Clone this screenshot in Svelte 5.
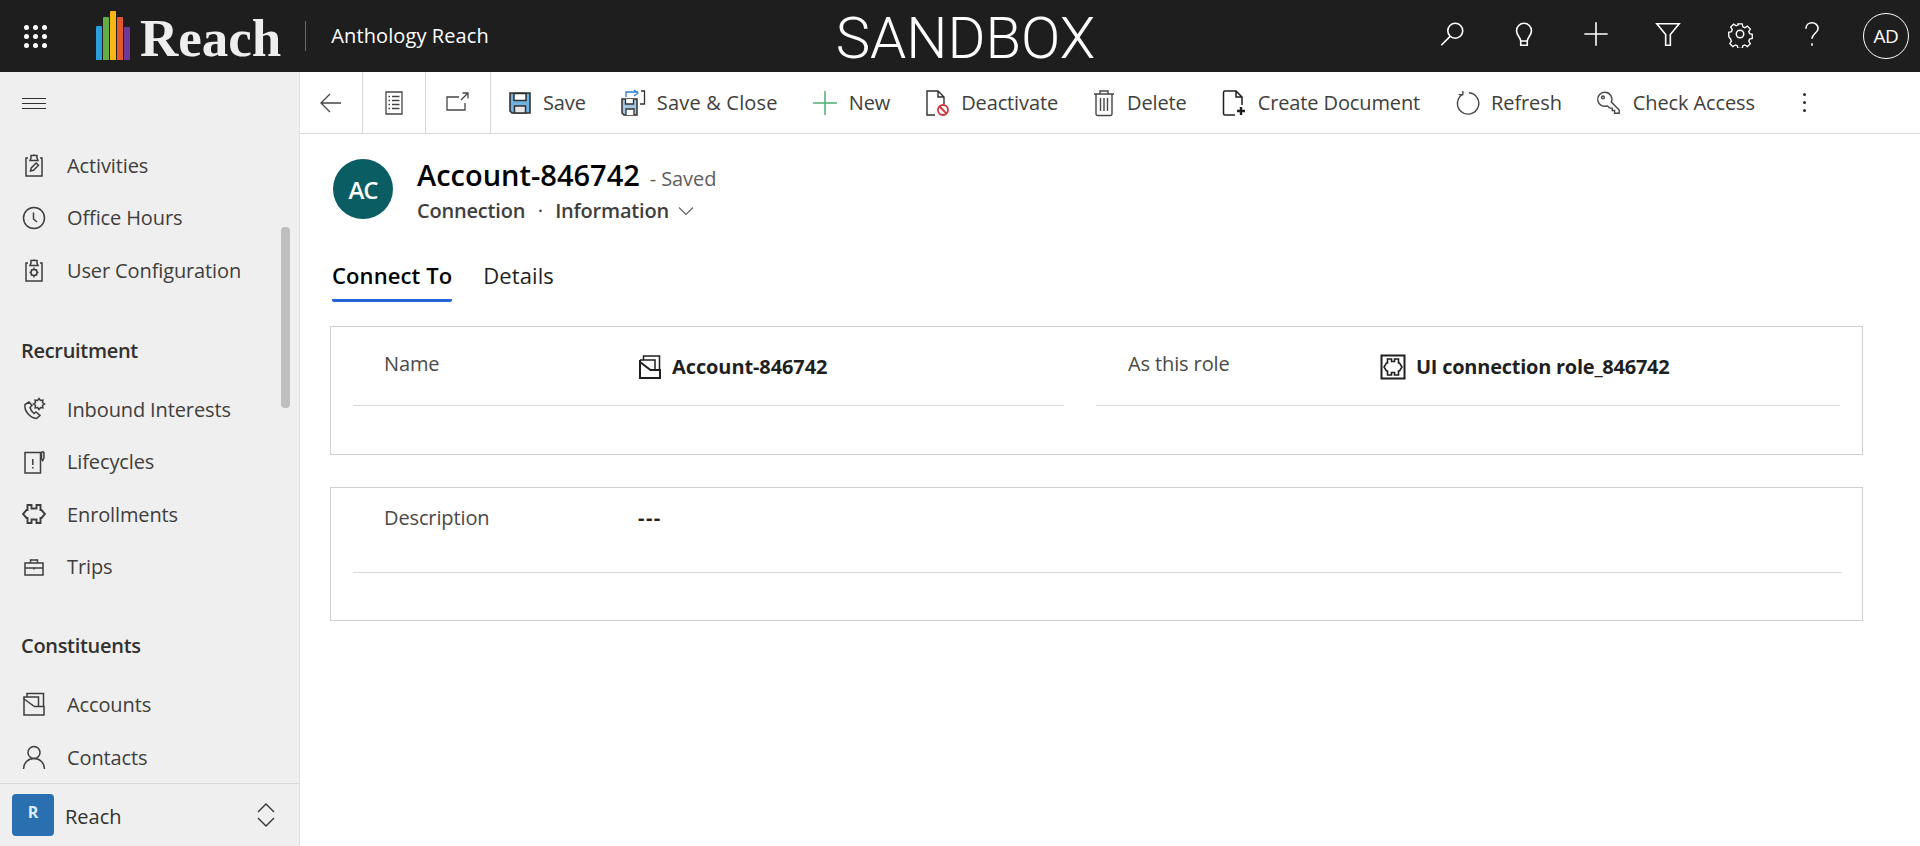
<script>
  const bars = [
    { color: '#2a9ed8', h: 34 },
    { color: '#63ad45', h: 43 },
    { color: '#fbb616', h: 49 },
    { color: '#e4572a', h: 43 },
    { color: '#6b3a96', h: 33 }
  ];

  // icons are line paths in a 24 box
  const icons = {
    activities: ['M6 5H4v18h16V5h-2', 'M9 5V2.5h2.2a1 1 0 0 1 1.6 0H15V5l1 2.5H8z', 'M8.5 18l.7-3 5-5 2.3 2.3-5 5z'],
    clock: ['M12 1.5a10.5 10.5 0 1 0 0 21 10.5 10.5 0 0 0 0-21z', 'M11.5 6.5V13l3.5 3'],
    config: ['M6 5H4v18h16V5h-2', 'M9 5V2.5h2.2a1 1 0 0 1 1.6 0H15V5l1 2.5H8z', 'M12 11.5a3 3 0 1 0 0 6 3 3 0 0 0 0-6z', 'M12 9.5v2M12 17.5v2M7.5 14.5H9M15 14.5h1.5M9 11.5l1 1M15 11.5l-1 1M9 17.5l1-1M15 17.5l-1-1'],
    inbound: ['M7 5L3 7.5C2 14 8 21 14.5 21.5l3.5-3-4-3.5-2 1.500C10 15 8.500 13 8 10.500l2-2z', 'M17 1.5L18.45 3.5 20.9 3.1 20.5 5.55 22.5 7 20.5 8.45 20.9 10.9 18.45 10.5 17 12.5 15.55 10.5 13.1 10.9 13.5 8.45 11.5 7 13.5 5.55 13.1 3.1 15.55 3.5z'],
    lifecycle: ['M3 2.5h15.5V23H3z', 'M10.8 9v6M10.8 17v1.5', 'M19.5 9V3a1.2 1.2 0 0 1 2.4 0v5l-1.2 2.5z'],
    puzzle: ['M5.5 8V3h4v3.5h5V3h4v5H19.500L23 12l-3.500 4H18.500v5h-4v-3.500h-5V21h-4v-5H4.500L1 12l3.500-4z'],
    trips: ['M3 8h18v12H3z', 'M8.5 8V5h7v3', 'M3 13h18', 'M12 12.5v2'],
    accounts: ['M2 7l10.5 7.5H22V23H2z', 'M2 7V5h14.5v9.5', 'M5 5V1.5h16.5v13'],
    contacts: ['M12 1.5a6 6 0 1 0 0 12 6 6 0 0 0 0-12z', 'M1.5 24c0-6 4.5-10.5 10.5-10.5S22.5 18 22.5 24']
  };

  const topNav = [
    { label: 'Activities', icon: 'activities' },
    { label: 'Office Hours', icon: 'clock' },
    { label: 'User Configuration', icon: 'config' }
  ];
  const recruitment = [
    { label: 'Inbound Interests', icon: 'inbound' },
    { label: 'Lifecycles', icon: 'lifecycle' },
    { label: 'Enrollments', icon: 'puzzle' },
    { label: 'Trips', icon: 'trips' }
  ];
  const constituents = [
    { label: 'Accounts', icon: 'accounts' },
    { label: 'Contacts', icon: 'contacts' }
  ];
</script>

{#snippet line(name, size = 24)}
  <svg width={size} height={size} viewBox="0 0 24 24" fill="none" stroke="currentColor" stroke-width={name === 'puzzle' ? 1.9 : 1.5}>
    {#each icons[name] as d}<path {d} />{/each}
  </svg>
{/snippet}

{#snippet navList(items)}
  {#each items as item}
    <a class="nav-item" href="#top">
      <span class="nav-icon">{@render line(item.icon)}</span>
      <span>{item.label}</span>
    </a>
  {/each}
{/snippet}

<div class="app">
  <header class="topbar">
    <div class="waffle">
      {#each Array(9) as _}<i></i>{/each}
    </div>
    <div class="logo">
      <div class="logo-bars">
        {#each bars as bar}<i style="height:{bar.h}px;background:{bar.color}"></i>{/each}
      </div>
      <span class="logo-word">Reach</span>
    </div>
    <span class="app-name">Anthology Reach</span>
    <div class="sandbox">SANDBOX</div>
    <div class="top-actions">
      <svg viewBox="0 0 30 30" fill="none" stroke="currentColor" stroke-width="1.7">
        <circle cx="18.5" cy="11.5" r="8" /><path d="M13 17.5L3.5 27" />
      </svg>
      <svg viewBox="0 0 30 30" fill="none" stroke="currentColor" stroke-width="1.7">
        <path d="M11.5 22.5c0-4-4.5-5.5-4.5-11a8 8 0 0 1 16 0c0 5.5-4.5 7-4.5 11zM11.5 22.5V27h7v-4.5" />
      </svg>
      <svg viewBox="0 0 30 30" fill="none" stroke="currentColor" stroke-width="1.7">
        <path d="M15 2.5v25M2.5 15h25" />
      </svg>
      <svg viewBox="0 0 30 30" fill="none" stroke="currentColor" stroke-width="1.7">
        <path d="M3 4h24l-9.5 11.5V27h-5V15.5z" />
      </svg>
      <svg viewBox="0 0 30 30" fill="none" stroke="currentColor" stroke-width="1.6">
        <circle cx="15" cy="15" r="4" />
        <path d="M12.5 3h5l.8 3.5 2.4 1 3-1.9 3.5 3.5-1.9 3 1 2.4 3.2.8v5l-3.2.8-1 2.4 1.900 3-3.500 3.500-3-1.900-2.400 1-.8 3.200h-5l-.8-3.200-2.400-1-3 1.900-3.500-3.500 1.900-3-1-2.400L1.500 18v-5l3.200-.8 1-2.400-1.900-3 3.500-3.500 3 1.900 2.400-1z" transform="translate(1.6 1.5) scale(.9)" />
      </svg>
      <svg viewBox="0 0 30 30" fill="none" stroke="currentColor" stroke-width="1.7">
        <path d="M8.5 9.5c0-4 3-6.5 6.5-6.5s6.5 2.5 6.5 6c0 5-6.5 5.5-6.5 11" />
        <path d="M15 25v2.5" />
      </svg>
      <span class="me">AD</span>
    </div>
  </header>

  <div class="shell">
    <aside class="sidebar">
      <div class="burger"><i></i><i></i><i></i></div>
      <nav class="nav">
        <div class="group">{@render navList(topNav)}</div>
        <h3>Recruitment</h3>
        <div class="group">{@render navList(recruitment)}</div>
        <h3>Constituents</h3>
        <div class="group">{@render navList(constituents)}</div>
      </nav>
      <div class="thumb"></div>
      <div class="area">
        <span class="tile">R</span>
        <span class="area-name">Reach</span>
        <svg width="20" height="28" viewBox="0 0 20 28" fill="none" stroke="#323130" stroke-width="1.3">
          <path d="M2 11l8-8 8 8M2 17l8 8 8-8" />
        </svg>
      </div>
    </aside>

    <main class="main">
      <div class="commands">
        <button class="nav-btn" aria-label="Back">
          <svg width="24" height="24" viewBox="0 0 24 24" fill="none" stroke="#484644" stroke-width="1.3"><path d="M22 12H2M11 3l-9 9 9 9" /></svg>
        </button>
        <button class="nav-btn" aria-label="Form">
          <svg width="22" height="28" viewBox="0 0 22 28" fill="none" stroke="#484644" stroke-width="1.3"><path d="M3 3h16v22H3zM5.5 7.5H7M9 7.5h7.5M5.5 11.5H7M9 11.5h7.5M5.5 15.5H7M9 15.5h7.5M5.5 19.5H7M9 19.5h7.5" /></svg>
        </button>
        <button class="nav-btn" aria-label="Open">
          <svg width="26" height="24" viewBox="0 0 26 24" fill="none" stroke="#484644" stroke-width="1.3"><path d="M14 6H2v13h18v-7M16 9l7-7M17.5 2H23v5.5" /></svg>
        </button>

        <div class="cmd-list">
          <button class="cmd">
            <svg width="24" height="24" viewBox="0 0 24 24">
              <path d="M2 2h20v20H4l-2-2z" fill="#6fb1e0" stroke="#323130" stroke-width="1.6" />
              <path d="M6 2.5h12v7H6z" fill="#fff" stroke="#323130" stroke-width="1.5" />
              <path d="M6.5 22v-7h11v7z" fill="#e8e8e8" stroke="#323130" stroke-width="1.5" />
            </svg>
            Save
          </button>
          <button class="cmd wide-text">
            <svg width="26" height="28" viewBox="0 0 26 28" fill="none">
              <path d="M2 10h15v16H4l-2-2z" fill="#a6c7e3" stroke="#323130" stroke-width="1.5" />
              <path d="M5.5 10v5h8v-5M6 26v-6h8v6" fill="#fff" stroke="#323130" stroke-width="1.3" />
              <path d="M6 8V3h12M14 1l4 3-4 3" stroke="#2b7cd3" stroke-width="1.3" />
              <path d="M21 2h3.5v13H20" stroke="#323130" stroke-width="1.3" />
            </svg>
            Save &amp; Close
          </button>
          <button class="cmd">
            <svg width="26" height="26" viewBox="0 0 26 26" fill="none" stroke="#4caf72" stroke-width="1.5"><path d="M13 1v24M1 13h24" /></svg>
            New
          </button>
          <button class="cmd">
            <svg width="26" height="28" viewBox="0 0 26 28" fill="none">
              <path d="M11 26H3V2h11l6 6v7M14 2v6h6" stroke="#323130" stroke-width="1.4" />
              <circle cx="19" cy="21" r="5" stroke="#d13438" stroke-width="1.8" fill="#fff" />
              <path d="M15.5 17.5l7 7" stroke="#d13438" stroke-width="1.8" />
            </svg>
            Deactivate
          </button>
          <button class="cmd">
            <svg width="24" height="28" viewBox="0 0 24 28" fill="none" stroke="#484644" stroke-width="1.4">
              <path d="M2 5h20M8 5V2h8v3M4 5v20a1.5 1.5 0 0 0 1.5 1.5h13A1.5 1.5 0 0 0 20 25V5M8.5 9v13M12 9v13M15.5 9v13" />
            </svg>
            Delete
          </button>
          <button class="cmd">
            <svg width="26" height="28" viewBox="0 0 26 28" fill="none" stroke="#1f1f1f" stroke-width="1.5">
              <path d="M14 26H4a1.5 1.5 0 0 1-1.5-1.5v-21A1.5 1.5 0 0 1 4 2h11l6 6v8M15 2v6h6" />
              <path d="M20 18v8M16 22h8" stroke-width="2.4" />
            </svg>
            Create Document
          </button>
          <button class="cmd">
            <svg width="26" height="28" viewBox="0 0 28 28" fill="none" stroke="#484644" stroke-width="1.5">
              <path d="M9.5 4.5A11.5 11.5 0 1 0 16 3" />
              <path d="M9.5 1v4H5" />
            </svg>
            Refresh
          </button>
          <button class="cmd">
            <svg width="26" height="28" viewBox="0 0 28 28" fill="none" stroke="#484644" stroke-width="1.5">
              <path d="M9.5 2.5a7.5 7.5 0 1 0 2.5 14.5l3 2.5h2.5V22H20v3h5v-3.500L16.500 13A7.500 7.500 0 0 0 9.500 2.500z" />
              <circle cx="7.5" cy="8" r="1.5" />
            </svg>
            Check Access
          </button>
          <div class="kebab"><i></i><i></i><i></i></div>
        </div>
      </div>

      <div class="record">
        <div class="avatar">AC</div>
        <div class="record-text">
          <div class="title-row">
            <span class="title">Account-846742</span>
            <span class="saved">- Saved</span>
          </div>
          <div class="sub-row">
            <span>Connection</span>
            <span class="dot">·</span>
            <span>Information</span>
            <svg width="16" height="10" viewBox="0 0 16 10" fill="none" stroke="#605e5c" stroke-width="1.1"><path d="M1 1.5l7 7 7-7" /></svg>
          </div>
        </div>
      </div>

      <div class="tabs">
        <span class="tab active">Connect To</span>
        <span class="tab">Details</span>
      </div>

      <section class="card first">
        <div class="field half">
          <span class="field-label">Name</span>
          <span class="lookup">
            <svg width="24" height="26" viewBox="0 0 24 26" fill="none" stroke="#1f1f1f" stroke-width="2">
              <path d="M2 8l10.5 8H22v8H2zM2 8V6" /><path d="M2 6h15v10M5.5 6V2h16v14" stroke-width="1.5" />
            </svg>
            Account-846742
          </span>
        </div>
        <div class="field half right">
          <span class="field-label">As this role</span>
          <span class="lookup">
            <svg width="26" height="26" viewBox="0 0 26 26" fill="none" stroke="#1f1f1f">
              <path d="M1.5 1.5h23v23h-23z" stroke-width="2" />
              <path d="M7.5 9V5h4v2.500h3V5h4v4h1l2.500 4-2.500 4h-1v4h-4v-2.500h-3V21h-4v-4h-1l-2.500-4 2.500-4z" stroke-width="1.6" />
            </svg>
            UI connection role_846742
          </span>
        </div>
      </section>

      <section class="card second">
        <div class="field wide">
          <span class="field-label">Description</span>
          <span class="desc-value">---</span>
        </div>
      </section>
    </main>
  </div>
</div>

<style>
  :global(body) {
    margin: 0;
    background: #fff;
  }

  .app {
    width: 1920px;
    height: 846px;
    display: flex;
    flex-direction: column;
    overflow: hidden;
    font-family: "Open Sans", "Noto Sans", sans-serif;
    color: #323130;
  }

  /* top bar */
  .topbar {
    position: relative;
    height: 72px;
    flex: none;
    display: flex;
    align-items: center;
    background: #1e1e1e;
    color: #fff;
  }

  .waffle {
    margin-left: 24px;
    width: 23px;
    display: grid;
    grid-template-columns: repeat(3, 5px);
    gap: 4px;
  }

  .waffle i {
    width: 5px;
    height: 5px;
    border-radius: 50%;
    background: #fff;
  }

  .logo {
    margin-left: 49px;
    display: flex;
    align-items: flex-end;
    height: 48px;
    padding-right: 24px;
  }

  .logo-bars {
    display: flex;
    align-items: flex-end;
    gap: 1px;
  }

  .logo-bars i {
    width: 6px;
    border-radius: 1px 1px 0 0;
  }

  .logo-word {
    margin: 0 0 -3px 10px;
    font: 700 53px/50px "Liberation Serif", serif;
    color: #eeeeee;
  }

  .app-name {
    border-left: 1px solid #6a6a6a;
    padding-left: 25px;
    line-height: 30px;
    font-size: 20px;
    letter-spacing: 0.1px;
  }

  .sandbox {
    position: absolute;
    left: 0;
    right: 0;
    top: 0;
    text-align: center;
    padding-left: 11px;
    line-height: 76px;
    font-family: Roboto, sans-serif;
    font-size: 58px;
    font-weight: 300;
  }

  .top-actions {
    margin-left: auto;
    padding-right: 11px;
    display: flex;
    align-items: center;
    gap: 44px;
  }

  .top-actions svg {
    width: 28px;
    height: 28px;
    margin-bottom: 4px;
  }

  .me {
    margin-left: -7px;
    width: 46px;
    height: 46px;
    box-sizing: border-box;
    border: 1px solid #fff;
    border-radius: 50%;
    display: flex;
    align-items: center;
    justify-content: center;
    font-size: 19px;
    letter-spacing: -0.5px;
  }

  .shell {
    flex: 1;
    min-height: 0;
    display: flex;
  }

  /* sidebar */
  .sidebar {
    position: relative;
    width: 299px;
    flex: none;
    display: flex;
    flex-direction: column;
    background: #efefef;
    border-right: 1px solid #e1dfdd;
  }

  .burger {
    height: 62px;
    flex: none;
    padding-left: 22px;
    display: flex;
    flex-direction: column;
    justify-content: center;
    gap: 4px;
  }

  .burger i {
    width: 24px;
    height: 1px;
    background: #323130;
  }

  .nav {
    flex: 1;
    min-height: 0;
    overflow: hidden;
    padding-top: 5px;
  }

  .nav-item {
    height: 52.6px;
    display: flex;
    align-items: center;
    color: #3f3e3d;
    text-decoration: none;
    font-size: 20px;
    letter-spacing: -0.12px;
  }

  .nav-icon {
    width: 67px;
    flex: none;
    display: flex;
    justify-content: center;
  }

  .nav h3 {
    margin: 0;
    padding: 41px 0 19px 21px;
    font-size: 20px;
    line-height: 26px;
    font-weight: 600;
    letter-spacing: -0.3px;
    color: #323130;
  }

  .nav h3:last-of-type {
    padding-top: 40px;
  }

  .thumb {
    position: absolute;
    left: 281px;
    top: 155px;
    width: 9px;
    height: 181px;
    border-radius: 4px;
    background: #bfbfbf;
  }

  .area {
    height: 63px;
    flex: none;
    box-sizing: border-box;
    border-top: 1px solid #d8d8d8;
    padding: 0 23px 0 12px;
    display: flex;
    align-items: center;
    font-size: 20px;
    color: #323130;
  }

  .tile {
    width: 42px;
    height: 42px;
    border-radius: 4px;
    background: #2a70b1;
    color: #dbeeff;
    display: flex;
    align-items: center;
    justify-content: center;
    font-size: 16px;
    font-weight: 700;
    padding-bottom: 6px;
    box-sizing: border-box;
  }

  .area-name {
    margin-left: 11px;
    padding-top: 2px;
    flex: 1;
  }

  /* main column */
  .main {
    flex: 1;
    min-width: 0;
    background: #fff;
  }

  .commands {
    height: 62px;
    box-sizing: border-box;
    border-bottom: 1px solid #d8d8d8;
    display: flex;
  }

  .nav-btn {
    width: 63px;
    height: 61px;
    flex: none;
    padding: 0;
    border: 0;
    border-right: 1px solid #d8d8d8;
    background: none;
    display: flex;
    align-items: center;
    justify-content: center;
  }

  .nav-btn:nth-child(3) {
    width: 65px;
  }

  .cmd-list {
    flex: 1;
    display: flex;
    align-items: center;
    padding-left: 17px;
    gap: 34px;
  }

  .cmd {
    padding: 0;
    border: 0;
    background: none;
    display: flex;
    align-items: center;
    gap: 11px;
    font-family: inherit;
    font-size: 20px;
    letter-spacing: -0.12px;
    color: #3f3e3d;
    white-space: nowrap;
  }

  .cmd.wide-text {
    letter-spacing: 0.18px;
  }

  .kebab {
    margin-left: 14px;
    display: flex;
    flex-direction: column;
    gap: 5px;
  }

  .kebab i {
    width: 3px;
    height: 3px;
    border-radius: 50%;
    background: #323130;
  }

  .record {
    padding: 25px 0 0 33px;
    display: flex;
    gap: 24px;
  }

  .avatar {
    width: 60px;
    height: 60px;
    flex: none;
    border-radius: 50%;
    background: #0a5d63;
    color: #fff;
    display: flex;
    align-items: center;
    justify-content: center;
    font-size: 24px;
    font-weight: 600;
    letter-spacing: -1px;
  }

  .record-text {
    margin-top: -3px;
  }

  .title-row {
    display: flex;
    align-items: baseline;
    gap: 10px;
    line-height: 38px;
  }

  .title {
    font-size: 29px;
    font-weight: 600;
    color: #000;
  }

  .saved {
    font-size: 20px;
    letter-spacing: -0.1px;
    color: #605e5c;
  }

  .sub-row {
    display: flex;
    align-items: center;
    font-size: 20px;
    font-weight: 600;
    letter-spacing: -0.2px;
    color: #3f3e3d;
    line-height: 26px;
  }

  .dot {
    width: 30px;
    text-align: center;
    font-weight: 400;
  }

  .sub-row svg {
    margin-left: 9px;
  }

  .tabs {
    margin: 35px 0 0 32px;
    display: flex;
    gap: 31px;
  }

  .tab {
    height: 43px;
    box-sizing: border-box;
    padding-top: 2px;
    font-size: 22px;
    line-height: 28px;
    letter-spacing: 0.1px;
    color: #1f1f1f;
    border-bottom: 3px solid transparent;
  }

  .tab.active {
    font-weight: 600;
    color: #000;
    border-bottom-color: #2563db;
    border-radius: 0 0 2px 2px;
  }

  .card {
    margin-left: 30px;
    width: 1533px;
    box-sizing: border-box;
    border: 1px solid #cfcfcf;
    padding: 0 20px 0 22px;
  }

  .card.first {
    margin-top: 24px;
    height: 129px;
    display: flex;
    gap: 32px;
  }

  .card.second {
    margin-top: 32px;
    height: 134px;
  }

  .field {
    height: 79px;
    box-sizing: border-box;
    border-bottom: 1px solid #d8d8d8;
    padding-left: 31px;
    display: flex;
    align-items: center;
    font-size: 20px;
    letter-spacing: -0.12px;
  }

  .half {
    width: 711px;
  }

  .half.right {
    width: 744px;
    padding-left: 32px;
  }

  .wide {
    height: 85px;
    align-items: flex-start;
    padding-top: 16px;
  }

  .field-label {
    width: 254px;
    flex: none;
    margin-top: -6px;
    color: #4a4948;
  }

  .half.right .field-label {
    width: 252px;
  }

  .wide .field-label {
    margin-top: 0;
  }

  .lookup {
    display: flex;
    align-items: center;
    gap: 10px;
    margin-top: 1px;
    font-weight: 700;
    font-size: 20px;
    letter-spacing: -0.1px;
    color: #1f1f1f;
  }

  .right .lookup {
    letter-spacing: -0.25px;
  }

  .desc-value {
    font-size: 20px;
    font-weight: 700;
    letter-spacing: 1.5px;
    color: #1f1f1f;
  }
</style>
